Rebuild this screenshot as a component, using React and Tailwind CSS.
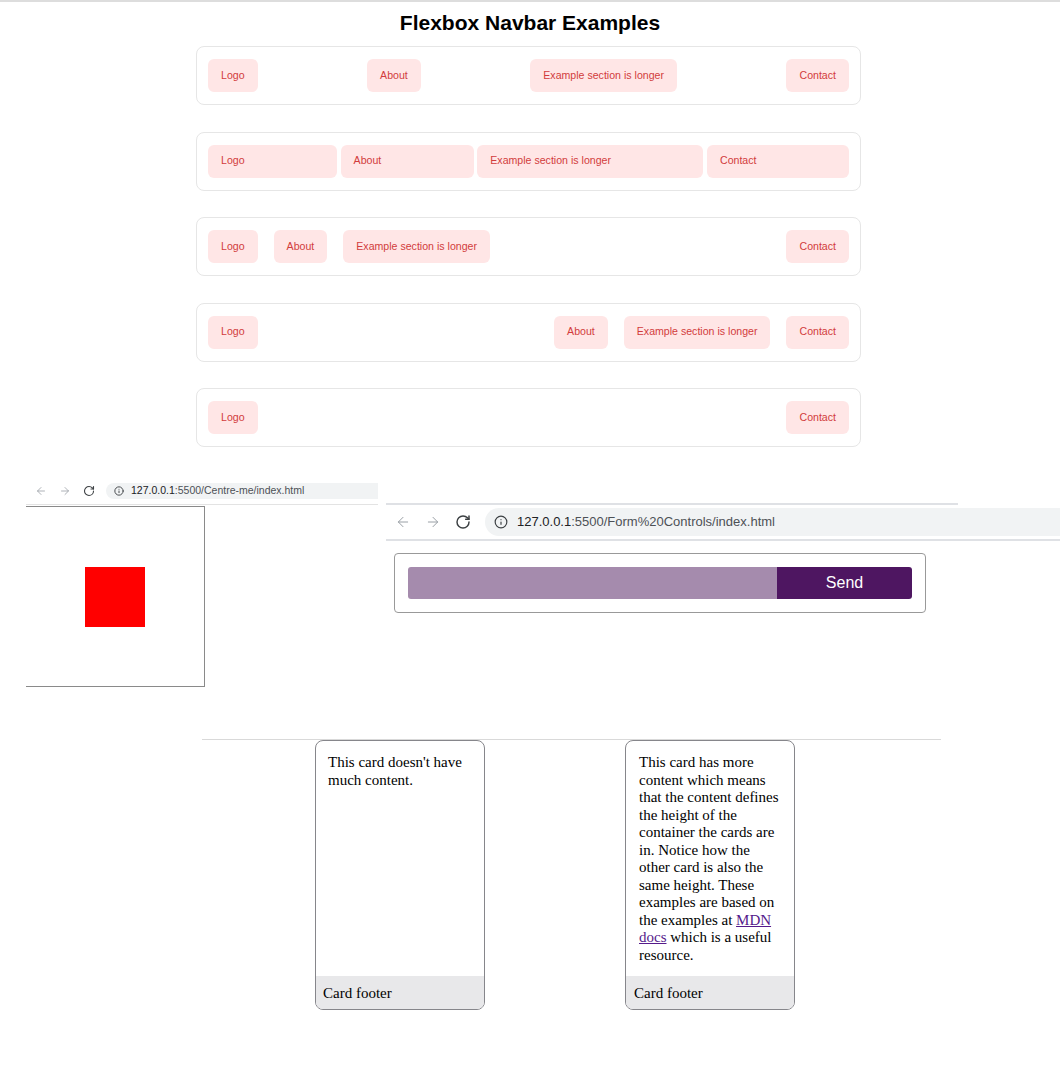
import { ArrowLeft, ArrowRight, RotateCw, Info } from "lucide-react";

const Item = ({ children, className = "" }) => (
  <div
    className={`h-[33px] px-[13px] flex items-center rounded-[6px] bg-[#ffe6e6] text-[#d23c3c] text-[10.6px] whitespace-nowrap ${className}`}
  >
    {children}
  </div>
);

const Nav = ({ children, className = "" }) => (
  <div
    className={`h-[59px] border border-[#e6e6e6] rounded-[8px] px-[11px] flex items-center ${className}`}
  >
    {children}
  </div>
);

export default function App() {
  return (
    <div className="w-[1060px] h-[1080px] bg-white overflow-hidden font-['Liberation_Sans',Arial,sans-serif]">
      <div className="h-[2px] bg-[#dddddd]" />
      <h1 className="mt-[9px] text-center text-[21px] leading-[24px] font-bold text-black">
        Flexbox Navbar Examples
      </h1>

      <div className="mt-[11px] ml-[196px] w-[665px] flex flex-col gap-[26.5px]">
        <Nav className="justify-between">
          <Item>Logo</Item>
          <Item>About</Item>
          <Item>Example section is longer</Item>
          <Item>Contact</Item>
        </Nav>
        <Nav className="gap-[3.5px]">
          <Item className="flex-auto">Logo</Item>
          <Item className="flex-auto">About</Item>
          <Item className="flex-auto">Example section is longer</Item>
          <Item className="flex-auto">Contact</Item>
        </Nav>
        <Nav className="gap-4">
          <Item>Logo</Item>
          <Item>About</Item>
          <Item>Example section is longer</Item>
          <Item className="ml-auto">Contact</Item>
        </Nav>
        <Nav className="gap-4">
          <Item className="mr-auto">Logo</Item>
          <Item>About</Item>
          <Item>Example section is longer</Item>
          <Item>Contact</Item>
        </Nav>
        <Nav className="justify-between">
          <Item>Logo</Item>
          <Item>Contact</Item>
        </Nav>
      </div>

      {/* browser screenshots */}
      <div className="mt-[31px] flex items-start">
        {/* left */}
        <div className="ml-[26px] w-[352px]">
          <div className="h-[27px] flex items-center pl-[9px] border-b border-[#e3e3e3]">
            <ArrowLeft size={12} strokeWidth={1.6} className="text-[#9aa0a6]" />
            <ArrowRight size={12} strokeWidth={1.6} className="ml-[12px] text-[#9aa0a6]" />
            <RotateCw size={12} strokeWidth={2.2} className="ml-[12px] text-[#3c4043]" />
            <div className="ml-[11px] flex-1 h-[16px] rounded-l-full bg-[#f1f3f4] flex items-center pl-[8px]">
              <Info size={10} strokeWidth={2.2} className="text-[#3c4043]" />
              <span className="ml-[7px] text-[10.5px] whitespace-nowrap">
                <span className="text-[#202124]">127.0.0.1</span>
                <span className="text-[#4d5156]">:5500/Centre-me/index.html</span>
              </span>
            </div>
          </div>
          <div className="mt-[1px] w-[179px] h-[181px] border-t border-r border-b border-[#8a8a8a] flex items-center justify-center">
            <div className="w-[60px] h-[60px] bg-[#ff0000]" />
          </div>
        </div>

        {/* right */}
        <div className="ml-[8px] mt-[25px] w-[674px]">
          <div className="w-[572px] h-[2px] bg-[#dfe1e5]" />
          <div className="h-[36px] flex items-center pl-[9px] border-b-2 border-[#dfe1e5]">
            <ArrowLeft size={16} strokeWidth={1.5} className="text-[#9aa0a6]" />
            <ArrowRight size={16} strokeWidth={1.5} className="ml-[14px] text-[#9aa0a6]" />
            <RotateCw size={16} strokeWidth={2.2} className="ml-[14px] text-[#3c4043]" />
            <div className="ml-[14px] flex-1 h-[28px] rounded-l-full bg-[#f1f3f4] flex items-center pl-[9px]">
              <Info size={14} strokeWidth={2} className="text-[#3c4043]" />
              <span className="ml-[9px] text-[13px] whitespace-nowrap">
                <span className="text-[#202124]">127.0.0.1</span>
                <span className="text-[#4d5156]">:5500/Form%20Controls/index.html</span>
              </span>
            </div>
          </div>
          <div className="mt-[12px] ml-[8px] w-[532px] h-[60px] border border-[#999999] rounded-[4px] px-[13px] flex items-center">
            <div className="flex-1 h-[32px] bg-[#a58bad] rounded-l-[3px]" />
            <div className="w-[135px] h-[32px] bg-[#4e1661] rounded-r-[3px] flex items-center justify-center text-white text-[16px]">
              Send
            </div>
          </div>
        </div>
      </div>

      {/* cards */}
      <div className="mt-[52px] ml-[202px] w-[739px] h-px bg-[#d9d9d9]" />
      <div className="ml-[315px] flex items-stretch gap-[140px] font-['Liberation_Serif','Times_New_Roman',serif] text-[15px] leading-[17.5px] text-black">
        <div className="w-[170px] border border-[#86868b] rounded-[8px] flex flex-col overflow-hidden">
          <div className="flex-1 px-[12px] pt-[13px] pb-[12px]">
            This card doesn't have much content.
          </div>
          <div className="h-[33px] bg-[#e8e8ea] px-[7px] pt-[2px] flex items-center">Card footer</div>
        </div>
        <div className="w-[170px] border border-[#86868b] rounded-[8px] flex flex-col overflow-hidden">
          <div className="flex-1 px-[13px] pt-[13px] pb-[12px]">
            This card has more content which means that the content defines the height of the
            container the cards are in. Notice how the other card is also the same height. These
            examples are based on the examples at{" "}
            <a href="#" className="text-[#551a8b] underline">
              MDN docs
            </a>{" "}
            which is a useful resource.
          </div>
          <div className="h-[33px] bg-[#e8e8ea] px-[8px] pt-[2px] flex items-center">Card footer</div>
        </div>
      </div>
    </div>
  );
}
